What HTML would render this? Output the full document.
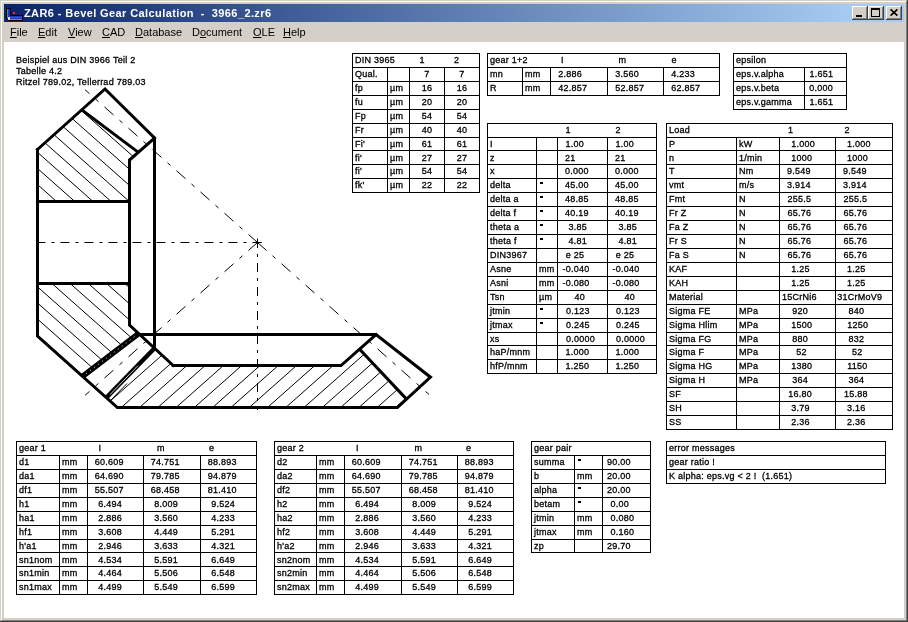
<!DOCTYPE html>
<html><head><meta charset="utf-8">
<style>
html,body{margin:0;padding:0;width:908px;height:622px;overflow:hidden;background:#d4d0c8;}
body{position:relative;font-family:"Liberation Sans",sans-serif;}
#frame{position:absolute;left:0;top:0;width:908px;height:622px;}
#title{position:absolute;left:4px;top:4px;width:900px;height:18px;background:linear-gradient(to right,#0a246a 0px,#a6caf0 846px,#a6caf0 900px);}
#ttext{will-change:transform;position:absolute;left:20px;top:3px;font-weight:bold;font-size:11px;color:#fff;white-space:pre;line-height:13px;letter-spacing:0.4px;}
.cb{position:absolute;top:2px;width:16px;height:14px;background:#d4d0c8;box-sizing:border-box;
  box-shadow:inset -1px -1px #404040, inset 1px 1px #ffffff, inset -2px -2px #808080, inset 2px 2px #d4d0c8;}
#menu{position:absolute;left:4px;top:22px;width:900px;height:20px;background:#d4d0c8;}
.mi{will-change:transform;position:absolute;top:4px;font-size:11px;line-height:13px;color:#000;white-space:pre;}
.mi u{text-decoration:underline;}
#client{position:absolute;left:4px;top:42px;width:900px;height:576px;background:#fff;}
svg{position:absolute;left:0;top:0;}
.layer{will-change:transform;}
.t{font-family:"Liberation Sans",sans-serif;font-size:9px;fill:#000;white-space:pre;letter-spacing:0.25px;stroke:#000;stroke-width:0.3px;}
.c{text-anchor:middle;}
</style></head><body>
<div id="frame"></div>
<svg width="908" height="622" style="z-index:0">
<rect x="0" y="0" width="908" height="622" fill="#d4d0c8"/>
<rect x="0" y="0" width="907" height="1" fill="#d4d0c8"/>
<rect x="1" y="1" width="905" height="1" fill="#ffffff"/>
<rect x="1" y="1" width="1" height="619" fill="#ffffff"/>
<rect x="906" y="1" width="1" height="620" fill="#808080"/>
<rect x="1" y="620" width="906" height="1" fill="#808080"/>
<rect x="907" y="0" width="1" height="622" fill="#404040"/>
<rect x="0" y="621" width="908" height="1" fill="#404040"/>
</svg>
<div id="title">
<svg width="20" height="16" style="left:2px;top:4px;" viewBox="0 0 20 16">
<path d="M0.5,0.5 L4.5,0.5 L4.5,7.5 L16.5,7.5 L16.5,12.5 L2.5,12.5 L0.5,10.5 Z" fill="#1838c8" stroke="#000" stroke-width="1"/>
<rect x="1" y="1" width="1" height="9" fill="#20a080"/>
<rect x="3" y="9" width="13" height="1" fill="#208050"/>
<rect x="3" y="11" width="13" height="1" fill="#30b0a0"/>
<rect x="2" y="9" width="2" height="3" fill="#e8e0a0"/>
<rect x="7" y="4" width="2" height="2" fill="#ff2020"/>
<path d="M4.5,2 L6,4 M9,5 L11,6 M13,6 L15,8" stroke="#600060" stroke-width="1"/>
</svg>
<div id="ttext">ZAR6 - Bevel Gear Calculation  -  3966_2.zr6</div>
<div class="cb" style="left:848px"><div style="position:absolute;left:4px;top:9px;width:6px;height:2px;background:#000"></div></div>
<div class="cb" style="left:864px"><div style="position:absolute;left:3px;top:2px;width:9px;height:9px;box-sizing:border-box;border:1px solid #000;border-top-width:2px"></div></div>
<div class="cb" style="left:882px"><svg width="16" height="14" style="left:0;top:0"><path d="M4.6,3.4 L11.4,9.6 M11.4,3.4 L4.6,9.6" stroke="#000" stroke-width="1.7"/></svg></div>
</div>
<div id="menu">
<span class="mi" style="left:5.5px"><u>F</u>ile</span>
<span class="mi" style="left:33.5px"><u>E</u>dit</span>
<span class="mi" style="left:63.5px"><u>V</u>iew</span>
<span class="mi" style="left:97.5px"><u>C</u>AD</span>
<span class="mi" style="left:130.5px"><u>D</u>atabase</span>
<span class="mi" style="left:188px">D<u>o</u>cument</span>
<span class="mi" style="left:249px"><u>O</u>LE</span>
<span class="mi" style="left:279px"><u>H</u>elp</span>
</div>
<div id="client"></div>
<svg class="layer" width="908" height="622" shape-rendering="crispEdges" style="z-index:2">
<rect x="352" y="53" width="128" height="1" fill="#000"/>
<rect x="352" y="67" width="128" height="1" fill="#000"/>
<rect x="352" y="81" width="128" height="1" fill="#000"/>
<rect x="352" y="95" width="128" height="1" fill="#000"/>
<rect x="352" y="109" width="128" height="1" fill="#000"/>
<rect x="352" y="123" width="128" height="1" fill="#000"/>
<rect x="352" y="137" width="128" height="1" fill="#000"/>
<rect x="352" y="150" width="128" height="1" fill="#000"/>
<rect x="352" y="164" width="128" height="1" fill="#000"/>
<rect x="352" y="178" width="128" height="1" fill="#000"/>
<rect x="352" y="192" width="128" height="1" fill="#000"/>
<rect x="352" y="53" width="1" height="140" fill="#000"/>
<rect x="479" y="53" width="1" height="140" fill="#000"/>
<rect x="387" y="67" width="1" height="126" fill="#000"/>
<rect x="409" y="67" width="1" height="126" fill="#000"/>
<rect x="444" y="67" width="1" height="126" fill="#000"/>
<text x="355.0" y="63" class="t">DIN 3965</text>
<text x="419.5" y="63" class="t">1</text>
<text x="454.0" y="63" class="t">2</text>
<text x="355.0" y="77" class="t">Qual.</text>
<text x="427.0" y="77" class="t c">7</text>
<text x="462.0" y="77" class="t c">7</text>
<text x="355.0" y="91" class="t">fp</text>
<text x="390.0" y="91" class="t">µm</text>
<text x="427.0" y="91" class="t c">16</text>
<text x="462.0" y="91" class="t c">16</text>
<text x="355.0" y="105" class="t">fu</text>
<text x="390.0" y="105" class="t">µm</text>
<text x="427.0" y="105" class="t c">20</text>
<text x="462.0" y="105" class="t c">20</text>
<text x="355.0" y="119" class="t">Fp</text>
<text x="390.0" y="119" class="t">µm</text>
<text x="427.0" y="119" class="t c">54</text>
<text x="462.0" y="119" class="t c">54</text>
<text x="355.0" y="133" class="t">Fr</text>
<text x="390.0" y="133" class="t">µm</text>
<text x="427.0" y="133" class="t c">40</text>
<text x="462.0" y="133" class="t c">40</text>
<text x="355.0" y="147" class="t">Fi'</text>
<text x="390.0" y="147" class="t">µm</text>
<text x="427.0" y="147" class="t c">61</text>
<text x="462.0" y="147" class="t c">61</text>
<text x="355.0" y="161" class="t">fi'</text>
<text x="390.0" y="161" class="t">µm</text>
<text x="427.0" y="161" class="t c">27</text>
<text x="462.0" y="161" class="t c">27</text>
<text x="355.0" y="174" class="t">fi'</text>
<text x="390.0" y="174" class="t">µm</text>
<text x="427.0" y="174" class="t c">54</text>
<text x="462.0" y="174" class="t c">54</text>
<text x="355.0" y="188" class="t">fk'</text>
<text x="390.0" y="188" class="t">µm</text>
<text x="427.0" y="188" class="t c">22</text>
<text x="462.0" y="188" class="t c">22</text>
<rect x="487" y="53" width="233" height="1" fill="#000"/>
<rect x="487" y="67" width="233" height="1" fill="#000"/>
<rect x="487" y="81" width="233" height="1" fill="#000"/>
<rect x="487" y="95" width="233" height="1" fill="#000"/>
<rect x="487" y="53" width="1" height="43" fill="#000"/>
<rect x="719" y="53" width="1" height="43" fill="#000"/>
<rect x="522" y="67" width="1" height="29" fill="#000"/>
<rect x="550" y="67" width="1" height="29" fill="#000"/>
<rect x="607" y="67" width="1" height="29" fill="#000"/>
<rect x="663" y="67" width="1" height="29" fill="#000"/>
<text x="490.0" y="63" class="t">gear 1+2</text>
<text x="561.0" y="63" class="t">I</text>
<text x="618.5" y="63" class="t">m</text>
<text x="671.5" y="63" class="t">e</text>
<text x="490.0" y="77" class="t">mn</text>
<text x="525.0" y="77" class="t">mm</text>
<text x="558.3" y="77" class="t">2.886</text>
<text x="615.3" y="77" class="t">3.560</text>
<text x="671.3" y="77" class="t">4.233</text>
<text x="490.0" y="91" class="t">R</text>
<text x="525.0" y="91" class="t">mm</text>
<text x="558.3" y="91" class="t">42.857</text>
<text x="615.3" y="91" class="t">52.857</text>
<text x="671.3" y="91" class="t">62.857</text>
<rect x="733" y="53" width="114" height="1" fill="#000"/>
<rect x="733" y="67" width="114" height="1" fill="#000"/>
<rect x="733" y="81" width="114" height="1" fill="#000"/>
<rect x="733" y="95" width="114" height="1" fill="#000"/>
<rect x="733" y="109" width="114" height="1" fill="#000"/>
<rect x="733" y="53" width="1" height="57" fill="#000"/>
<rect x="846" y="53" width="1" height="57" fill="#000"/>
<rect x="804" y="67" width="1" height="43" fill="#000"/>
<text x="736.0" y="63" class="t">epsilon</text>
<text x="736.0" y="77" class="t">eps.v.alpha</text>
<text x="809.5" y="77" class="t">1.651</text>
<text x="736.0" y="91" class="t">eps.v.beta</text>
<text x="809.2" y="91" class="t">0.000</text>
<text x="736.0" y="105" class="t">eps.v.gamma</text>
<text x="809.5" y="105" class="t">1.651</text>
<rect x="487" y="123" width="170" height="1" fill="#000"/>
<rect x="487" y="137" width="170" height="1" fill="#000"/>
<rect x="487" y="150" width="170" height="1" fill="#000"/>
<rect x="487" y="164" width="170" height="1" fill="#000"/>
<rect x="487" y="178" width="170" height="1" fill="#000"/>
<rect x="487" y="192" width="170" height="1" fill="#000"/>
<rect x="487" y="206" width="170" height="1" fill="#000"/>
<rect x="487" y="220" width="170" height="1" fill="#000"/>
<rect x="487" y="234" width="170" height="1" fill="#000"/>
<rect x="487" y="248" width="170" height="1" fill="#000"/>
<rect x="487" y="262" width="170" height="1" fill="#000"/>
<rect x="487" y="276" width="170" height="1" fill="#000"/>
<rect x="487" y="290" width="170" height="1" fill="#000"/>
<rect x="487" y="304" width="170" height="1" fill="#000"/>
<rect x="487" y="318" width="170" height="1" fill="#000"/>
<rect x="487" y="332" width="170" height="1" fill="#000"/>
<rect x="487" y="345" width="170" height="1" fill="#000"/>
<rect x="487" y="359" width="170" height="1" fill="#000"/>
<rect x="487" y="373" width="170" height="1" fill="#000"/>
<rect x="487" y="123" width="1" height="251" fill="#000"/>
<rect x="656" y="123" width="1" height="251" fill="#000"/>
<rect x="536" y="137" width="1" height="237" fill="#000"/>
<rect x="557" y="137" width="1" height="237" fill="#000"/>
<rect x="607" y="137" width="1" height="237" fill="#000"/>
<text x="565.5" y="133" class="t">1</text>
<text x="615.5" y="133" class="t">2</text>
<text x="490.0" y="147" class="t">I</text>
<text x="565.6" y="147" class="t">1.00</text>
<text x="615.6" y="147" class="t">1.00</text>
<text x="490.0" y="161" class="t">z</text>
<text x="565.0" y="161" class="t">21</text>
<text x="615.0" y="161" class="t">21</text>
<text x="490.0" y="174" class="t">x</text>
<text x="565.0" y="174" class="t">0.000</text>
<text x="615.0" y="174" class="t">0.000</text>
<text x="490.0" y="188" class="t">delta</text>
<rect x="540" y="182" width="3" height="2" fill="#000"/>
<text x="565.0" y="188" class="t">45.00</text>
<text x="615.0" y="188" class="t">45.00</text>
<text x="490.0" y="202" class="t">delta a</text>
<rect x="540" y="196" width="3" height="2" fill="#000"/>
<text x="565.0" y="202" class="t">48.85</text>
<text x="615.0" y="202" class="t">48.85</text>
<text x="490.0" y="216" class="t">delta f</text>
<rect x="540" y="210" width="3" height="2" fill="#000"/>
<text x="565.0" y="216" class="t">40.19</text>
<text x="615.0" y="216" class="t">40.19</text>
<text x="490.0" y="230" class="t">theta a</text>
<rect x="540" y="224" width="3" height="2" fill="#000"/>
<text x="568.6" y="230" class="t">3.85</text>
<text x="618.6" y="230" class="t">3.85</text>
<text x="490.0" y="244" class="t">theta f</text>
<rect x="540" y="238" width="3" height="2" fill="#000"/>
<text x="568.6" y="244" class="t">4.81</text>
<text x="618.6" y="244" class="t">4.81</text>
<text x="490.0" y="258" class="t">DIN3967</text>
<text x="565.8" y="258" class="t">e 25</text>
<text x="615.8" y="258" class="t">e 25</text>
<text x="490.0" y="272" class="t">Asne</text>
<text x="539.0" y="272" class="t">mm</text>
<text x="562.6" y="272" class="t">-0.040</text>
<text x="612.6" y="272" class="t">-0.040</text>
<text x="490.0" y="286" class="t">Asni</text>
<text x="539.0" y="286" class="t">mm</text>
<text x="562.6" y="286" class="t">-0.080</text>
<text x="612.6" y="286" class="t">-0.080</text>
<text x="490.0" y="300" class="t">Tsn</text>
<text x="539.0" y="300" class="t">µm</text>
<text x="574.6" y="300" class="t">40</text>
<text x="624.6" y="300" class="t">40</text>
<text x="490.0" y="314" class="t">jtmin</text>
<rect x="540" y="308" width="3" height="2" fill="#000"/>
<text x="565.9" y="314" class="t">0.123</text>
<text x="615.9" y="314" class="t">0.123</text>
<text x="490.0" y="328" class="t">jtmax</text>
<rect x="540" y="322" width="3" height="2" fill="#000"/>
<text x="565.9" y="328" class="t">0.245</text>
<text x="615.9" y="328" class="t">0.245</text>
<text x="490.0" y="342" class="t">xs</text>
<text x="565.9" y="342" class="t">0.0000</text>
<text x="615.9" y="342" class="t">0.0000</text>
<text x="490.0" y="355" class="t">haP/mnm</text>
<text x="565.6" y="355" class="t">1.000</text>
<text x="615.6" y="355" class="t">1.000</text>
<text x="490.0" y="369" class="t">hfP/mnm</text>
<text x="565.6" y="369" class="t">1.250</text>
<text x="615.6" y="369" class="t">1.250</text>
<rect x="666" y="123" width="227" height="1" fill="#000"/>
<rect x="666" y="137" width="227" height="1" fill="#000"/>
<rect x="666" y="150" width="227" height="1" fill="#000"/>
<rect x="666" y="164" width="227" height="1" fill="#000"/>
<rect x="666" y="178" width="227" height="1" fill="#000"/>
<rect x="666" y="192" width="227" height="1" fill="#000"/>
<rect x="666" y="206" width="227" height="1" fill="#000"/>
<rect x="666" y="220" width="227" height="1" fill="#000"/>
<rect x="666" y="234" width="227" height="1" fill="#000"/>
<rect x="666" y="248" width="227" height="1" fill="#000"/>
<rect x="666" y="262" width="227" height="1" fill="#000"/>
<rect x="666" y="276" width="227" height="1" fill="#000"/>
<rect x="666" y="290" width="227" height="1" fill="#000"/>
<rect x="666" y="304" width="227" height="1" fill="#000"/>
<rect x="666" y="318" width="227" height="1" fill="#000"/>
<rect x="666" y="332" width="227" height="1" fill="#000"/>
<rect x="666" y="345" width="227" height="1" fill="#000"/>
<rect x="666" y="359" width="227" height="1" fill="#000"/>
<rect x="666" y="373" width="227" height="1" fill="#000"/>
<rect x="666" y="387" width="227" height="1" fill="#000"/>
<rect x="666" y="401" width="227" height="1" fill="#000"/>
<rect x="666" y="415" width="227" height="1" fill="#000"/>
<rect x="666" y="429" width="227" height="1" fill="#000"/>
<rect x="666" y="123" width="1" height="307" fill="#000"/>
<rect x="892" y="123" width="1" height="307" fill="#000"/>
<rect x="736" y="137" width="1" height="293" fill="#000"/>
<rect x="779" y="137" width="1" height="293" fill="#000"/>
<rect x="835" y="137" width="1" height="293" fill="#000"/>
<text x="669.0" y="133" class="t">Load</text>
<text x="788.0" y="133" class="t">1</text>
<text x="844.5" y="133" class="t">2</text>
<text x="669.0" y="147" class="t">P</text>
<text x="739.0" y="147" class="t">kW</text>
<text x="791.3" y="147" class="t">1.000</text>
<text x="847.1" y="147" class="t">1.000</text>
<text x="669.0" y="161" class="t">n</text>
<text x="739.0" y="161" class="t">1/min</text>
<text x="791.3" y="161" class="t">1000</text>
<text x="847.1" y="161" class="t">1000</text>
<text x="669.0" y="174" class="t">T</text>
<text x="739.0" y="174" class="t">Nm</text>
<text x="787.0" y="174" class="t">9.549</text>
<text x="843.0" y="174" class="t">9.549</text>
<text x="669.0" y="188" class="t">vmt</text>
<text x="739.0" y="188" class="t">m/s</text>
<text x="787.0" y="188" class="t">3.914</text>
<text x="843.0" y="188" class="t">3.914</text>
<text x="669.0" y="202" class="t">Fmt</text>
<text x="739.0" y="202" class="t">N</text>
<text x="787.5" y="202" class="t">255.5</text>
<text x="843.5" y="202" class="t">255.5</text>
<text x="669.0" y="216" class="t">Fr Z</text>
<text x="739.0" y="216" class="t">N</text>
<text x="787.5" y="216" class="t">65.76</text>
<text x="843.5" y="216" class="t">65.76</text>
<text x="669.0" y="230" class="t">Fa Z</text>
<text x="739.0" y="230" class="t">N</text>
<text x="787.5" y="230" class="t">65.76</text>
<text x="843.5" y="230" class="t">65.76</text>
<text x="669.0" y="244" class="t">Fr S</text>
<text x="739.0" y="244" class="t">N</text>
<text x="787.5" y="244" class="t">65.76</text>
<text x="843.5" y="244" class="t">65.76</text>
<text x="669.0" y="258" class="t">Fa S</text>
<text x="739.0" y="258" class="t">N</text>
<text x="787.5" y="258" class="t">65.76</text>
<text x="843.5" y="258" class="t">65.76</text>
<text x="669.0" y="272" class="t">KAF</text>
<text x="791.3" y="272" class="t">1.25</text>
<text x="847.1" y="272" class="t">1.25</text>
<text x="669.0" y="286" class="t">KAH</text>
<text x="791.3" y="286" class="t">1.25</text>
<text x="847.1" y="286" class="t">1.25</text>
<text x="669.0" y="300" class="t">Material</text>
<text x="782.0" y="300" class="t">15CrNi6</text>
<text x="837.2" y="300" class="t">31CrMoV9</text>
<text x="669.0" y="314" class="t">Sigma FE</text>
<text x="739.0" y="314" class="t">MPa</text>
<text x="792.2" y="314" class="t">920</text>
<text x="848.5" y="314" class="t">840</text>
<text x="669.0" y="328" class="t">Sigma Hlim</text>
<text x="739.0" y="328" class="t">MPa</text>
<text x="791.3" y="328" class="t">1500</text>
<text x="847.2" y="328" class="t">1250</text>
<text x="669.0" y="342" class="t">Sigma FG</text>
<text x="739.0" y="342" class="t">MPa</text>
<text x="792.2" y="342" class="t">880</text>
<text x="848.5" y="342" class="t">832</text>
<text x="669.0" y="355" class="t">Sigma F</text>
<text x="739.0" y="355" class="t">MPa</text>
<text x="796.2" y="355" class="t">52</text>
<text x="852.0" y="355" class="t">52</text>
<text x="669.0" y="369" class="t">Sigma HG</text>
<text x="739.0" y="369" class="t">MPa</text>
<text x="791.3" y="369" class="t">1380</text>
<text x="847.2" y="369" class="t">1150</text>
<text x="669.0" y="383" class="t">Sigma H</text>
<text x="739.0" y="383" class="t">MPa</text>
<text x="792.2" y="383" class="t">364</text>
<text x="848.5" y="383" class="t">364</text>
<text x="669.0" y="397" class="t">SF</text>
<text x="788.2" y="397" class="t">16.80</text>
<text x="844.0" y="397" class="t">15.88</text>
<text x="669.0" y="411" class="t">SH</text>
<text x="791.3" y="411" class="t">3.79</text>
<text x="847.1" y="411" class="t">3.16</text>
<text x="669.0" y="425" class="t">SS</text>
<text x="791.3" y="425" class="t">2.36</text>
<text x="847.1" y="425" class="t">2.36</text>
<rect x="16" y="441" width="241" height="1" fill="#000"/>
<rect x="16" y="455" width="241" height="1" fill="#000"/>
<rect x="16" y="469" width="241" height="1" fill="#000"/>
<rect x="16" y="483" width="241" height="1" fill="#000"/>
<rect x="16" y="497" width="241" height="1" fill="#000"/>
<rect x="16" y="511" width="241" height="1" fill="#000"/>
<rect x="16" y="525" width="241" height="1" fill="#000"/>
<rect x="16" y="539" width="241" height="1" fill="#000"/>
<rect x="16" y="552" width="241" height="1" fill="#000"/>
<rect x="16" y="566" width="241" height="1" fill="#000"/>
<rect x="16" y="580" width="241" height="1" fill="#000"/>
<rect x="16" y="594" width="241" height="1" fill="#000"/>
<rect x="16" y="441" width="1" height="154" fill="#000"/>
<rect x="256" y="441" width="1" height="154" fill="#000"/>
<rect x="59" y="455" width="1" height="140" fill="#000"/>
<rect x="87" y="455" width="1" height="140" fill="#000"/>
<rect x="143" y="455" width="1" height="140" fill="#000"/>
<rect x="200" y="455" width="1" height="140" fill="#000"/>
<text x="19.0" y="451" class="t">gear 1</text>
<text x="98.5" y="451" class="t">I</text>
<text x="157.0" y="451" class="t">m</text>
<text x="209.0" y="451" class="t">e</text>
<text x="19.0" y="465" class="t">d1</text>
<text x="62.0" y="465" class="t">mm</text>
<text x="94.8" y="465" class="t">60.609</text>
<text x="150.8" y="465" class="t">74.751</text>
<text x="207.8" y="465" class="t">88.893</text>
<text x="19.0" y="479" class="t">da1</text>
<text x="62.0" y="479" class="t">mm</text>
<text x="94.8" y="479" class="t">64.690</text>
<text x="150.8" y="479" class="t">79.785</text>
<text x="207.8" y="479" class="t">94.879</text>
<text x="19.0" y="493" class="t">df1</text>
<text x="62.0" y="493" class="t">mm</text>
<text x="94.8" y="493" class="t">55.507</text>
<text x="150.8" y="493" class="t">68.458</text>
<text x="207.8" y="493" class="t">81.410</text>
<text x="19.0" y="507" class="t">h1</text>
<text x="62.0" y="507" class="t">mm</text>
<text x="98.3" y="507" class="t">6.494</text>
<text x="154.3" y="507" class="t">8.009</text>
<text x="211.3" y="507" class="t">9.524</text>
<text x="19.0" y="521" class="t">ha1</text>
<text x="62.0" y="521" class="t">mm</text>
<text x="98.3" y="521" class="t">2.886</text>
<text x="154.3" y="521" class="t">3.560</text>
<text x="211.3" y="521" class="t">4.233</text>
<text x="19.0" y="535" class="t">hf1</text>
<text x="62.0" y="535" class="t">mm</text>
<text x="98.3" y="535" class="t">3.608</text>
<text x="154.3" y="535" class="t">4.449</text>
<text x="211.3" y="535" class="t">5.291</text>
<text x="19.0" y="549" class="t">h'a1</text>
<text x="62.0" y="549" class="t">mm</text>
<text x="98.3" y="549" class="t">2.946</text>
<text x="154.3" y="549" class="t">3.633</text>
<text x="211.3" y="549" class="t">4.321</text>
<text x="19.0" y="563" class="t">sn1nom</text>
<text x="62.0" y="563" class="t">mm</text>
<text x="98.3" y="563" class="t">4.534</text>
<text x="154.3" y="563" class="t">5.591</text>
<text x="211.3" y="563" class="t">6.649</text>
<text x="19.0" y="576" class="t">sn1min</text>
<text x="62.0" y="576" class="t">mm</text>
<text x="98.3" y="576" class="t">4.464</text>
<text x="154.3" y="576" class="t">5.506</text>
<text x="211.3" y="576" class="t">6.548</text>
<text x="19.0" y="590" class="t">sn1max</text>
<text x="62.0" y="590" class="t">mm</text>
<text x="98.3" y="590" class="t">4.499</text>
<text x="154.3" y="590" class="t">5.549</text>
<text x="211.3" y="590" class="t">6.599</text>
<rect x="274" y="441" width="240" height="1" fill="#000"/>
<rect x="274" y="455" width="240" height="1" fill="#000"/>
<rect x="274" y="469" width="240" height="1" fill="#000"/>
<rect x="274" y="483" width="240" height="1" fill="#000"/>
<rect x="274" y="497" width="240" height="1" fill="#000"/>
<rect x="274" y="511" width="240" height="1" fill="#000"/>
<rect x="274" y="525" width="240" height="1" fill="#000"/>
<rect x="274" y="539" width="240" height="1" fill="#000"/>
<rect x="274" y="552" width="240" height="1" fill="#000"/>
<rect x="274" y="566" width="240" height="1" fill="#000"/>
<rect x="274" y="580" width="240" height="1" fill="#000"/>
<rect x="274" y="594" width="240" height="1" fill="#000"/>
<rect x="274" y="441" width="1" height="154" fill="#000"/>
<rect x="513" y="441" width="1" height="154" fill="#000"/>
<rect x="316" y="455" width="1" height="140" fill="#000"/>
<rect x="344" y="455" width="1" height="140" fill="#000"/>
<rect x="401" y="455" width="1" height="140" fill="#000"/>
<rect x="457" y="455" width="1" height="140" fill="#000"/>
<text x="277.0" y="451" class="t">gear 2</text>
<text x="356.0" y="451" class="t">I</text>
<text x="414.5" y="451" class="t">m</text>
<text x="466.0" y="451" class="t">e</text>
<text x="277.0" y="465" class="t">d2</text>
<text x="319.0" y="465" class="t">mm</text>
<text x="351.8" y="465" class="t">60.609</text>
<text x="408.8" y="465" class="t">74.751</text>
<text x="464.8" y="465" class="t">88.893</text>
<text x="277.0" y="479" class="t">da2</text>
<text x="319.0" y="479" class="t">mm</text>
<text x="351.8" y="479" class="t">64.690</text>
<text x="408.8" y="479" class="t">79.785</text>
<text x="464.8" y="479" class="t">94.879</text>
<text x="277.0" y="493" class="t">df2</text>
<text x="319.0" y="493" class="t">mm</text>
<text x="351.8" y="493" class="t">55.507</text>
<text x="408.8" y="493" class="t">68.458</text>
<text x="464.8" y="493" class="t">81.410</text>
<text x="277.0" y="507" class="t">h2</text>
<text x="319.0" y="507" class="t">mm</text>
<text x="355.3" y="507" class="t">6.494</text>
<text x="412.3" y="507" class="t">8.009</text>
<text x="468.3" y="507" class="t">9.524</text>
<text x="277.0" y="521" class="t">ha2</text>
<text x="319.0" y="521" class="t">mm</text>
<text x="355.3" y="521" class="t">2.886</text>
<text x="412.3" y="521" class="t">3.560</text>
<text x="468.3" y="521" class="t">4.233</text>
<text x="277.0" y="535" class="t">hf2</text>
<text x="319.0" y="535" class="t">mm</text>
<text x="355.3" y="535" class="t">3.608</text>
<text x="412.3" y="535" class="t">4.449</text>
<text x="468.3" y="535" class="t">5.291</text>
<text x="277.0" y="549" class="t">h'a2</text>
<text x="319.0" y="549" class="t">mm</text>
<text x="355.3" y="549" class="t">2.946</text>
<text x="412.3" y="549" class="t">3.633</text>
<text x="468.3" y="549" class="t">4.321</text>
<text x="277.0" y="563" class="t">sn2nom</text>
<text x="319.0" y="563" class="t">mm</text>
<text x="355.3" y="563" class="t">4.534</text>
<text x="412.3" y="563" class="t">5.591</text>
<text x="468.3" y="563" class="t">6.649</text>
<text x="277.0" y="576" class="t">sn2min</text>
<text x="319.0" y="576" class="t">mm</text>
<text x="355.3" y="576" class="t">4.464</text>
<text x="412.3" y="576" class="t">5.506</text>
<text x="468.3" y="576" class="t">6.548</text>
<text x="277.0" y="590" class="t">sn2max</text>
<text x="319.0" y="590" class="t">mm</text>
<text x="355.3" y="590" class="t">4.499</text>
<text x="412.3" y="590" class="t">5.549</text>
<text x="468.3" y="590" class="t">6.599</text>
<rect x="531" y="441" width="120" height="1" fill="#000"/>
<rect x="531" y="455" width="120" height="1" fill="#000"/>
<rect x="531" y="469" width="120" height="1" fill="#000"/>
<rect x="531" y="483" width="120" height="1" fill="#000"/>
<rect x="531" y="497" width="120" height="1" fill="#000"/>
<rect x="531" y="511" width="120" height="1" fill="#000"/>
<rect x="531" y="525" width="120" height="1" fill="#000"/>
<rect x="531" y="539" width="120" height="1" fill="#000"/>
<rect x="531" y="552" width="120" height="1" fill="#000"/>
<rect x="531" y="441" width="1" height="112" fill="#000"/>
<rect x="650" y="441" width="1" height="112" fill="#000"/>
<rect x="574" y="455" width="1" height="98" fill="#000"/>
<rect x="602" y="455" width="1" height="98" fill="#000"/>
<text x="534.0" y="451" class="t">gear pair</text>
<text x="534.0" y="465" class="t">summa</text>
<rect x="578" y="459" width="3" height="2" fill="#000"/>
<text x="607.0" y="465" class="t">90.00</text>
<text x="534.0" y="479" class="t">b</text>
<text x="577.0" y="479" class="t">mm</text>
<text x="607.0" y="479" class="t">20.00</text>
<text x="534.0" y="493" class="t">alpha</text>
<rect x="578" y="487" width="3" height="2" fill="#000"/>
<text x="607.0" y="493" class="t">20.00</text>
<text x="534.0" y="507" class="t">betam</text>
<rect x="578" y="501" width="3" height="2" fill="#000"/>
<text x="610.6" y="507" class="t">0.00</text>
<text x="534.0" y="521" class="t">jtmin</text>
<text x="577.0" y="521" class="t">mm</text>
<text x="610.6" y="521" class="t">0.080</text>
<text x="534.0" y="535" class="t">jtmax</text>
<text x="577.0" y="535" class="t">mm</text>
<text x="610.6" y="535" class="t">0.160</text>
<text x="534.0" y="549" class="t">zp</text>
<text x="607.0" y="549" class="t">29.70</text>
<rect x="666" y="441" width="220" height="1" fill="#000"/>
<rect x="666" y="455" width="220" height="1" fill="#000"/>
<rect x="666" y="469" width="220" height="1" fill="#000"/>
<rect x="666" y="483" width="220" height="1" fill="#000"/>
<rect x="666" y="441" width="1" height="43" fill="#000"/>
<rect x="885" y="441" width="1" height="43" fill="#000"/>
<text x="669.0" y="451" class="t">error messages</text>
<text x="669.0" y="465" class="t">gear ratio !</text>
<text x="669.0" y="479" class="t">K alpha: eps.vg &lt; 2 !  (1.651)</text>
<text x="16.0" y="63" class="t">Beispiel aus DIN 3966 Teil 2</text>
<text x="16.0" y="74" class="t">Tabelle 4.2</text>
<text x="16.0" y="85" class="t">Ritzel 789.02, Tellerrad 789.03</text>
</svg>
<svg width="908" height="622" style="z-index:3">
<defs>
<clipPath id="c1"><polygon points="37.5,149.5 82.2,110.3 137.2,151.5 129.5,160 129.5,201.5 37.5,201.5"/></clipPath>
<clipPath id="c2"><polygon points="37.5,283.5 129.5,283.5 129.5,325 138.7,333.5 83,376 37.5,336"/></clipPath>
<clipPath id="c3"><polygon points="106.5,397.5 154.5,348.2 173.2,365.5 341,365.5 359.9,349.5 406.2,398.8 397.4,407.5 117.4,407.5"/></clipPath>
</defs>
<path d="M-94.37,100 L29.79,210 M-76.17,100 L47.99,210 M-57.97,100 L66.19,210 M-39.77,100 L84.39,210 M-21.57,100 L102.59,210 M-3.37,100 L120.79,210 M14.83,100 L138.99,210 M33.03,100 L157.19,210 M51.23,100 L175.39,210 M69.43,100 L193.59,210 M87.63,100 L211.79,210 M105.83,100 L229.99,210 M124.03,100 L248.19,210 M142.23,100 L266.39,210" stroke="#000" stroke-width="1" fill="none" clip-path="url(#c1)"/>
<path d="M-85.05,275 L33.46,380 M-66.85,275 L51.66,380 M-48.65,275 L69.86,380 M-30.45,275 L88.06,380 M-12.25,275 L106.26,380 M5.95,275 L124.46,380 M24.15,275 L142.66,380 M42.35,275 L160.86,380 M60.55,275 L179.06,380 M78.75,275 L197.26,380 M96.95,275 L215.46,380 M115.15,275 L233.66,380 M133.35,275 L251.86,380 M151.55,275 L270.06,380" stroke="#000" stroke-width="1" fill="none" clip-path="url(#c2)"/>
<path d="M105.99,340 L26.99,410 M124.27,340 L45.27,410 M142.55,340 L63.55,410 M160.83,340 L81.83,410 M179.11,340 L100.11,410 M197.39,340 L118.39,410 M215.67,340 L136.67,410 M233.95,340 L154.95,410 M252.23,340 L173.23,410 M270.51,340 L191.51,410 M288.79,340 L209.79,410 M307.07,340 L228.07,410 M325.35,340 L246.35,410 M343.63,340 L264.63,410 M361.91,340 L282.91,410 M380.19,340 L301.19,410 M398.47,340 L319.47,410 M416.75,340 L337.75,410 M435.03,340 L356.03,410 M453.31,340 L374.31,410 M471.59,340 L392.59,410 M489.87,340 L410.87,410" stroke="#000" stroke-width="1" fill="none" clip-path="url(#c3)"/>
<line x1="261.5" y1="242.5" x2="37" y2="242.5" stroke="#000" stroke-width="1" stroke-dasharray="9 6 3 6"/>
<line x1="257.5" y1="239.0" x2="257.5" y2="410" stroke="#000" stroke-width="1" stroke-dasharray="9 6 3 6"/>
<line x1="257.5" y1="242.5" x2="85" y2="89.66" stroke="#000" stroke-width="1" stroke-dasharray="12.02 8.02 4.01 8.02"/>
<line x1="257.5" y1="242.5" x2="429" y2="394.45" stroke="#000" stroke-width="1" stroke-dasharray="12.02 8.02 4.01 8.02"/>
<line x1="257.5" y1="242.5" x2="85" y2="395.34" stroke="#000" stroke-width="1" stroke-dasharray="12.02 8.02 4.01 8.02"/>
<path d="M253.5,242.5 H261.5 M257.5,238.5 V247.5" stroke="#000" stroke-width="1"/>
<polyline points="37.5,149.5 105,89 154.5,138 154.5,348.2" fill="none" stroke="#000" stroke-width="3" stroke-linejoin="miter" stroke-linecap="square" />
<polyline points="82.2,110.3 137.2,151.5" fill="none" stroke="#000" stroke-width="3" stroke-linejoin="miter" stroke-linecap="square" />
<polyline points="154.5,138 129.5,160 129.5,325 173.2,365.5" fill="none" stroke="#000" stroke-width="3" stroke-linejoin="miter" stroke-linecap="square" />
<polyline points="37.5,149.5 37.5,336 117.4,407.5 397.4,407.5 430.5,377.2 376,334.5 138.7,334.5" fill="none" stroke="#000" stroke-width="3" stroke-linejoin="miter" stroke-linecap="square" />
<polyline points="37.5,201.5 129.5,201.5" fill="none" stroke="#000" stroke-width="3" stroke-linejoin="miter" stroke-linecap="square" />
<polyline points="37.5,283.5 129.5,283.5" fill="none" stroke="#000" stroke-width="3" stroke-linejoin="miter" stroke-linecap="square" />
<polyline points="83,376 138.7,333.5" fill="none" stroke="#000" stroke-width="5.5" stroke-linejoin="miter" stroke-linecap="butt" />
<line x1="86" y1="373.7" x2="136.2" y2="335.4" stroke="#fff" stroke-width="1" stroke-dasharray="1 4"/>
<polyline points="106.5,397.5 154.5,348.2" fill="none" stroke="#000" stroke-width="4.5" stroke-linejoin="miter" stroke-linecap="butt" />
<line x1="110" y1="394.6" x2="138" y2="365.6" stroke="#fff" stroke-width="0.8"/>
<polyline points="173.2,365.5 341,365.5 376,334.5" fill="none" stroke="#000" stroke-width="3" stroke-linejoin="miter" stroke-linecap="square" />
<polyline points="359.9,349.5 406.2,398.8" fill="none" stroke="#000" stroke-width="3" stroke-linejoin="miter" stroke-linecap="square" />
<line x1="111" y1="400" x2="127" y2="383.5" stroke="#000" stroke-width="1"/>
</svg>
</body></html>
